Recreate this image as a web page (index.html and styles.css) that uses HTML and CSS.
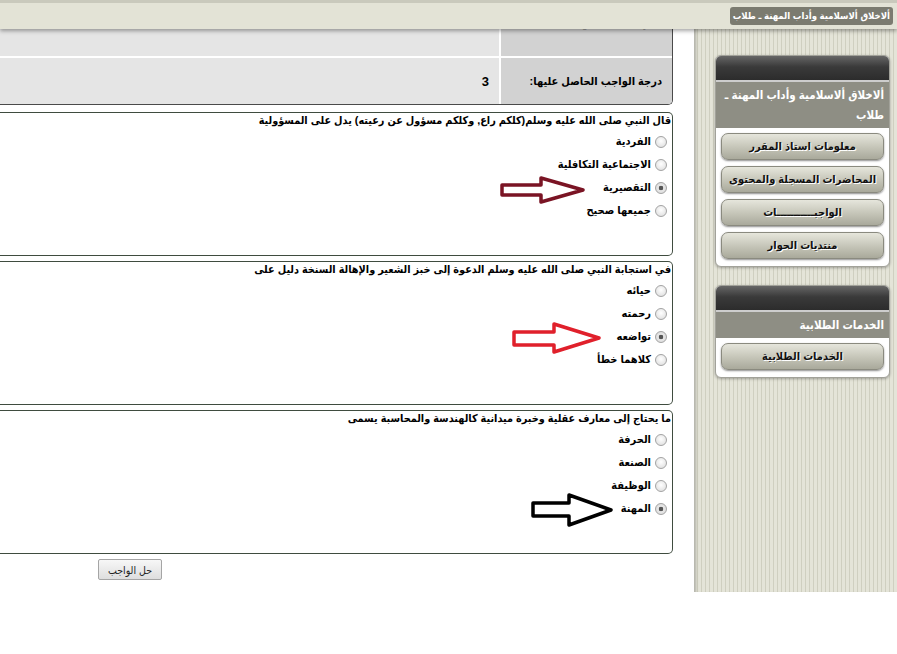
FILE: index.html
```html
<!DOCTYPE html>
<html lang="ar" dir="rtl">
<head>
<meta charset="utf-8">
<title>الواجب</title>
<link rel="stylesheet" href="styles.css">
</head>
<body>
<header class="topbar">
  <span class="course-tag">ألاخلاق ألاسلامية وأداب المهنة ـ طلاب</span>
</header>

<div class="page">
  <aside class="sidebar">
    <section class="menu-box">
      <div class="menu-cap"></div>
      <div class="menu-title">ألاخلاق ألاسلامية وأداب المهنة ـ طلاب</div>
      <nav class="menu-body">
        <a class="menu-btn">معلومات استاذ المقرر</a>
        <a class="menu-btn">المحاضرات المسجلة والمحتوى</a>
        <a class="menu-btn">الواجبـــــــــــات</a>
        <a class="menu-btn">منتديات الحوار</a>
      </nav>
    </section>
    <section class="menu-box menu-box-second">
      <div class="menu-cap"></div>
      <div class="menu-title">الخدمات الطلابية</div>
      <nav class="menu-body">
        <a class="menu-btn">الخدمات الطلابية</a>
      </nav>
    </section>
  </aside>

  <main class="content">
    <div class="grade-table">
      <div class="cell label hidden-row">الدرجة الكلية للواجب:</div>
      <div class="cell value hidden-row">0</div>
      <div class="cell label">درجة الواجب الحاصل عليها:</div>
      <div class="cell value">3</div>
    </div>

    <div class="question">
      <div class="q-text">قال النبي صلى الله عليه وسلم(كلكم راع, وكلكم مسؤول عن رعيته) يدل على المسؤولية</div>
      <div class="options">
        <label class="opt"><input type="radio" name="q1"><span>الفردية</span></label>
        <label class="opt"><input type="radio" name="q1"><span>الاجتماعية التكافلية</span></label>
        <label class="opt"><input type="radio" name="q1" checked><span>التقصيرية</span></label>
        <label class="opt"><input type="radio" name="q1"><span>جميعها صحيح</span></label>
      </div>
      <svg class="arrow arrow-1" width="86" height="28" viewBox="0 0 86 28">
        <polygon points="2,9 41,9 41,2 83,14 41,26 41,19 2,19" fill="none" stroke="#7a1424" stroke-width="3.5" stroke-linejoin="round"/>
      </svg>
    </div>

    <div class="question">
      <div class="q-text">في استجابة النبي صلى الله عليه وسلم الدعوة إلى خبز الشعير والإهالة السنخة دليل على</div>
      <div class="options">
        <label class="opt"><input type="radio" name="q2"><span>حيائه</span></label>
        <label class="opt"><input type="radio" name="q2"><span>رحمته</span></label>
        <label class="opt"><input type="radio" name="q2" checked><span>تواضعه</span></label>
        <label class="opt"><input type="radio" name="q2"><span>كلاهما خطأ</span></label>
      </div>
      <svg class="arrow arrow-2" width="90" height="32" viewBox="0 0 90 32">
        <polygon points="2,10 42,10 42,2 87,16 42,30 42,23 2,23" fill="none" stroke="#e0202b" stroke-width="3.5" stroke-linejoin="round"/>
      </svg>
    </div>

    <div class="question">
      <div class="q-text">ما يحتاج إلى معارف عقلية وخبرة ميدانية كالهندسة والمحاسبة يسمى</div>
      <div class="options">
        <label class="opt"><input type="radio" name="q3"><span>الحرفة</span></label>
        <label class="opt"><input type="radio" name="q3"><span>الصنعة</span></label>
        <label class="opt"><input type="radio" name="q3"><span>الوظيفة</span></label>
        <label class="opt"><input type="radio" name="q3" checked><span>المهنة</span></label>
      </div>
      <svg class="arrow arrow-3" width="83" height="34" viewBox="0 0 83 34">
        <polygon points="2,10 38,10 38,2 80,17 38,32 38,23 2,23" fill="none" stroke="#000" stroke-width="3.5" stroke-linejoin="round"/>
      </svg>
    </div>

    <div class="submit-row">
      <button class="submit" type="button">حل الواجب</button>
    </div>
  </main>
</div>
</body>
</html>
```

FILE: styles.css
```css
* {
  box-sizing: border-box;
}

body {
  margin: 0;
  background: #fff;
  color: #000;
  font-family: "Liberation Sans", "DejaVu Sans Condensed", "DejaVu Sans", sans-serif;
  font-size: 11px;
}

/* top fixed bar */
.topbar {
  position: fixed;
  top: 0;
  left: 0;
  right: 0;
  height: 29px;
  padding: 4px 4px 0;
  border-top: 3px solid #c9c9bc;
  background: #e3e3d6;
  box-shadow: 0 2px 4px rgba(0, 0, 0, 0.35);
  display: flex;
  align-items: flex-start;
  z-index: 10;
}

.course-tag {
  height: 18px;
  line-height: 18px;
  padding: 0 3px;
  background: #7b7b70;
  color: #fff;
  font-weight: bold;
  font-size: 9.5px;
  border-radius: 3px;
  white-space: nowrap;
}

/* page layout */
.page {
  display: flex;
  align-items: flex-start;
  gap: 21px;
}

.sidebar {
  flex: none;
  width: 203px;
  height: 592px;
  padding: 55px 7px 0 21px;
  background: repeating-linear-gradient(90deg, #e4e4d8 0 3px, #cfcfc0 3px 4px);
  box-shadow: inset 4px 0 3px -2px rgba(0, 0, 0, 0.22);
}

.menu-box {
  border: 1px solid #a2a29a;
  border-radius: 6px;
  background: #fff;
  box-shadow: 0 1px 3px rgba(0, 0, 0, 0.3);
  overflow: hidden;
}

.menu-box-second {
  margin-top: 18px;
}

.menu-cap {
  height: 26px;
  background: linear-gradient(#666, #3a3a3a 45%, #2c2c2c);
  border-bottom: 2px solid #cdcdcd;
}

.menu-title {
  background: #8e8e84;
  color: #fff;
  font-weight: bold;
  font-size: 11.5px;
  line-height: 20px;
  padding: 3px 5px 3px;
}

.menu-body {
  display: flex;
  flex-direction: column;
  gap: 6px;
  padding: 5px 5px 7px;
}

.menu-btn {
  display: flex;
  align-items: center;
  justify-content: center;
  height: 27px;
  border: 1px solid #8a8a7f;
  border-radius: 7px;
  background: linear-gradient(#e6e6dc, #c4c4b7 55%, #a9a99b);
  box-shadow: 0 1px 2px rgba(0, 0, 0, 0.45);
  color: #111;
  font-weight: bold;
  font-size: 11px;
  text-shadow: 1px 1px 0 #fff;
  white-space: nowrap;
}

/* content */
.content {
  flex: none;
  width: 673px;
}

.grade-table {
  display: grid;
  grid-template-columns: 171px 1fr;
  grid-template-rows: 56px 46px;
  gap: 2px;
  background: #fff;
  border-right: 1px solid #4a4a4a;
  border-bottom: 1px solid #4a4a4a;
  border-bottom-right-radius: 5px;
  overflow: hidden;
}

.cell {
  display: flex;
  align-items: center;
  padding: 0 10px;
  font-weight: bold;
  white-space: nowrap;
}

.cell.hidden-row {
  padding-bottom: 9px;
}

.cell.label {
  background: #d2d2d2;
}

.cell.value {
  background: #e5e5e5;
  font-size: 13px;
}

.question {
  position: relative;
  height: 144px;
  margin-top: 5px;
  border: 1px solid #3f4c3f;
  border-left: none;
  border-radius: 0 5px 5px 0;
}

.grade-table + .question {
  margin-top: 7px;
}

.q-text {
  line-height: 15px;
  padding-right: 1px;
  font-weight: bold;
  white-space: nowrap;
  font-size: 10.8px;
}

.options {
  margin-top: 2px;
}

.opt {
  display: flex;
  align-items: center;
  gap: 4px;
  height: 23px;
  padding-right: 5px;
  font-weight: bold;
}

.opt input {
  appearance: none;
  -webkit-appearance: none;
  width: 12px;
  height: 12px;
  margin: 0;
  border: 1px solid #a3a3a3;
  border-radius: 50%;
  background: radial-gradient(circle at 50% 40%, #fff, #dadada);
}

.opt input:checked {
  background: radial-gradient(circle, #555 0 2px, #e8e8e8 2.6px, #d6d6d6 100%);
}

.arrow {
  position: absolute;
}

.arrow-1 {
  left: 500px;
  top: 63px;
}

.arrow-2 {
  left: 512px;
  top: 60px;
}

.arrow-3 {
  left: 531px;
  top: 82px;
}

.submit-row {
  display: flex;
  margin-top: 5px;
  padding-right: 511px;
}

.submit {
  width: 64px;
  height: 21px;
  padding: 0;
  border: 1px solid #a5a5a5;
  border-radius: 2px;
  background: linear-gradient(#f7f7f7, #dedede);
  font-family: "DejaVu Sans Condensed", "DejaVu Sans", sans-serif;
  font-size: 10.5px;
  color: #222;
}
```
